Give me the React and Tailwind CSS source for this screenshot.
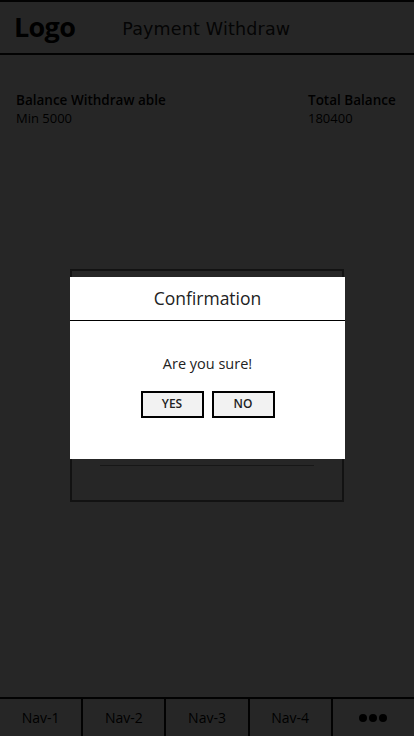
import React from 'react';

const navItems = ['Nav-1', 'Nav-2', 'Nav-3', 'Nav-4'];

const App = () => {
  return (
    <div className="relative h-[736px] w-[414px] overflow-hidden bg-white text-black font-['Open_Sans',sans-serif]">
      {/* page underneath */}
      <div className="flex h-full flex-col">
        <header className="flex h-[55px] items-center border-y-2 border-[#111] px-[14px]">
          <span className="text-[27px] font-bold tracking-tight">Logo</span>
          <span className="ml-[47px] pt-[3px] font-['DejaVu_Sans',sans-serif] text-[17.5px] font-normal tracking-[0.01em] text-[#222]">Payment Withdraw</span>
        </header>

        <div className="flex justify-between px-[16px] pt-[36px]">
          <div>
            <div className="text-[13.5px] font-semibold leading-[18px]">Balance Withdraw able</div>
            <div className="text-[13px] leading-[18px]">Min 5000</div>
          </div>
          <div className="w-[90px]">
            <div className="text-[13.5px] font-semibold leading-[18px]">Total Balance</div>
            <div className="text-[13px] leading-[18px]">180400</div>
          </div>
        </div>

        <div className="flex flex-1 justify-center pt-[142px]">
          <div className="flex h-[233px] w-[274px] flex-col justify-end border-2 border-[#777] pb-[34px]">
            <div className="mx-auto w-[214px] border-t border-[#999]" />
          </div>
        </div>

        <nav className="flex h-[39px] border-t-2 border-[#111]">
          {navItems.map((n) => (
            <div key={n} className="flex flex-1 items-center justify-center border-r-2 border-[#111] text-[14px] font-medium">
              {n}
            </div>
          ))}
          <div className="flex flex-1 items-center justify-center gap-[2px]">
            <span className="h-[8px] w-[8px] rounded-full bg-black" />
            <span className="h-[8px] w-[8px] rounded-full bg-black" />
            <span className="h-[8px] w-[8px] rounded-full bg-black" />
          </div>
        </nav>
      </div>

      {/* overlay */}
      <div className="absolute inset-0 bg-black/85" />

      {/* modal */}
      <div className="absolute left-[70px] top-[277px] h-[182px] w-[275px] bg-white text-[#222]">
        <div className="flex h-[44px] items-center justify-center border-b border-black text-[17.5px] font-medium">
          Confirmation
        </div>
        <div className="flex flex-col items-center pt-[32px]">
          <div className="text-[14.5px]">Are you sure!</div>
          <div className="mt-[16px] flex gap-[8px]">
            <button className="h-[27px] w-[63px] border-2 border-black bg-[#f2f2f2] text-[12px] font-semibold">YES</button>
            <button className="h-[27px] w-[63px] border-2 border-black bg-[#f2f2f2] text-[12px] font-semibold">NO</button>
          </div>
        </div>
      </div>
    </div>
  );
};

export default App;
